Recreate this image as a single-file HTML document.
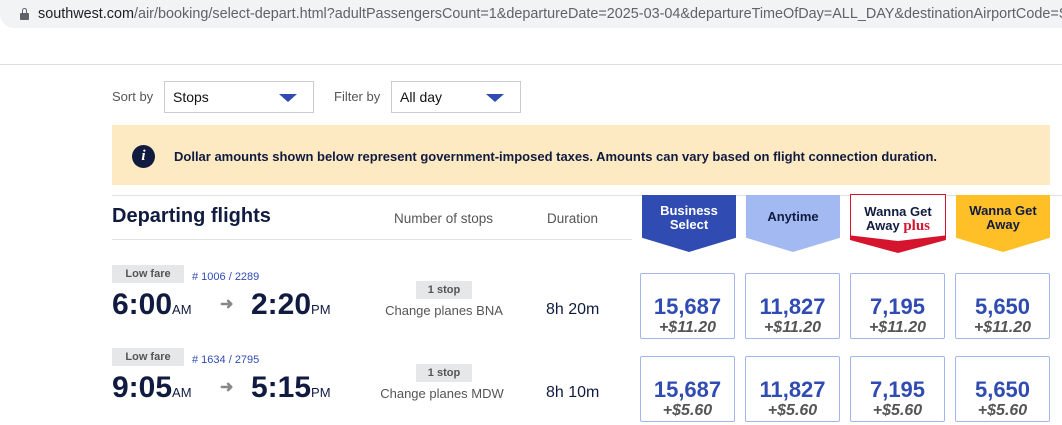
<!DOCTYPE html>
<html><head><style>
*{margin:0;padding:0;box-sizing:border-box}
body{width:1062px;height:425px;overflow:hidden;background:#fff;font-family:"Liberation Sans",Arial,sans-serif;position:relative;color:#111b40}
.a{position:absolute}
.url{left:0;top:0;width:1062px;height:28px;background:#f1f3f4;border-radius:0 0 0 14px;font-size:14.4px;color:#5f6368;line-height:28px;padding-left:38px;white-space:nowrap;overflow:hidden}
.url b{font-weight:normal;color:#202124}
.sel{height:32px;border:1px solid #ccc;font-size:14px;line-height:30px;padding-left:8px;color:#111}
.tri{position:absolute;right:16px;top:12px;width:0;height:0;border-left:9px solid transparent;border-right:9px solid transparent;border-top:8px solid #304cb2}
.lbl{font-size:13px;color:#555}
.hdr{width:94px;height:57px;font-weight:bold;font-size:13px;text-align:center;line-height:14px;clip-path:polygon(0 0,100% 0,100% 75%,50% 100%,0 75%)}
.box{width:95px;height:66px;border:1px solid #a3b7ee;border-radius:2px;text-align:center}
.box .p{margin-top:21px;font-size:22px;font-weight:bold;color:#304cb2;line-height:24px}
.box .t{font-size:16px;font-weight:bold;font-style:italic;color:#555;line-height:18px}
.lf{width:72px;height:18px;background:#e6e7e8;color:#555;font-weight:bold;font-size:11px;text-align:center;line-height:18px}
.fn{font-size:11px;color:#304cb2}
.tm{font-size:30px;font-weight:bold;color:#111b40}
.tm small{font-size:13px;font-weight:normal}
.stop{width:56px;height:18px;background:#e6e7e8;color:#555;font-weight:bold;font-size:11px;text-align:center;line-height:18px}
.cp{font-size:13px;color:#555;width:160px;text-align:center}
.du{font-size:16px;color:#111b40}
</style></head><body>
<div class="a url"><b>southwest.com</b>/air/booking/select-depart.html?adultPassengersCount=1&amp;departureDate=2025-03-04&amp;departureTimeOfDay=ALL_DAY&amp;destinationAirportCode=SAT</div>
<div class="a" style="left:20px;top:13px;width:9px;height:7px;background:#5f6368;border-radius:1px"></div>
<div class="a" style="left:22px;top:8px;width:5px;height:7px;border:1.5px solid #5f6368;border-bottom:none;border-radius:3px 3px 0 0"></div>
<div class="a" style="left:0;top:64px;width:1062px;height:1px;background:#ddd"></div>
<div class="a lbl" style="left:112px;top:89px">Sort by</div>
<div class="a sel" style="left:164px;top:81px;width:150px">Stops<div class="tri"></div></div>
<div class="a lbl" style="left:334px;top:89px">Filter by</div>
<div class="a sel" style="left:391px;top:81px;width:130px">All day<div class="tri"></div></div>
<div class="a" style="left:112px;top:125px;width:938px;height:60px;background:#fde9c2"></div>
<div class="a" style="left:132px;top:145px;width:23px;height:23px;border-radius:50%;background:#111b40;color:#fff;font:italic bold 15px 'Liberation Serif',serif;text-align:center;line-height:23px">i</div>
<div class="a" style="left:174px;top:149px;font-size:13px;font-weight:bold;color:#111b40;white-space:nowrap">Dollar amounts shown below represent government-imposed taxes. Amounts can vary based on flight connection duration.</div>
<div class="a" style="left:112px;top:195px;width:950px;height:1px;background:#e2e2e2"></div>
<div class="a" style="left:112px;top:239px;width:520px;height:1px;background:#e2e2e2"></div>
<div class="a" style="left:112px;top:205px;font-size:20px;font-weight:bold;color:#111b40">Departing flights</div>
<div class="a lbl" style="left:394px;top:211px;font-size:13.5px">Number of stops</div>
<div class="a lbl" style="left:547px;top:211px;font-size:13.5px">Duration</div>
<div class="a hdr" style="left:642px;top:195px;background:#304cb2;color:#fff;padding-top:9px">Business<br>Select</div>
<div class="a hdr" style="left:746px;top:195px;background:#a3b9f1;color:#111b40;padding-top:15px">Anytime</div>
<div class="a" style="left:850px;top:194px;width:96px;height:59px;background:#d5152e;clip-path:polygon(0 0,100% 0,100% 78%,50% 100%,0 78%)"></div>
<div class="a hdr" style="left:851px;top:195px;width:94px;height:46px;background:#fff;color:#111b40;padding-top:10px;clip-path:polygon(0 0,100% 0,100% 88%,50% 100%,0 88%)">Wanna Get<br>Away <span style="color:#d5152e;font-family:'Liberation Serif',serif;font-size:15px">plus</span></div>
<div class="a hdr" style="left:956px;top:195px;background:#ffbf27;color:#111b40;padding-top:9px">Wanna Get<br>Away</div>

<div class="a lf" style="left:112px;top:265px">Low fare</div>
<div class="a fn" style="left:192px;top:271px"># 1006 / 2289</div>
<div class="a tm" style="left:112px;top:288px">6:00<small>AM</small></div>
<div class="a" style="left:220px;top:294px;color:#888;font-size:16px;font-weight:bold">&#10140;</div>
<div class="a tm" style="left:251px;top:288px">2:20<small>PM</small></div>
<div class="a stop" style="left:416px;top:281px">1 stop</div>
<div class="a cp" style="left:364px;top:303px">Change planes BNA</div>
<div class="a du" style="left:546px;top:301px">8h 20m</div>

<div class="a lf" style="left:112px;top:348px">Low fare</div>
<div class="a fn" style="left:192px;top:354px"># 1634 / 2795</div>
<div class="a tm" style="left:112px;top:371px">9:05<small>AM</small></div>
<div class="a" style="left:220px;top:377px;color:#888;font-size:16px;font-weight:bold">&#10140;</div>
<div class="a tm" style="left:251px;top:371px">5:15<small>PM</small></div>
<div class="a stop" style="left:416px;top:364px">1 stop</div>
<div class="a cp" style="left:362px;top:386px">Change planes MDW</div>
<div class="a du" style="left:546px;top:384px">8h 10m</div>

<div class="a box" style="left:640px;top:273px"><div class="p">15,687</div><div class="t">+$11.20</div></div>
<div class="a box" style="left:745px;top:273px"><div class="p">11,827</div><div class="t">+$11.20</div></div>
<div class="a box" style="left:850px;top:273px"><div class="p">7,195</div><div class="t">+$11.20</div></div>
<div class="a box" style="left:955px;top:273px"><div class="p">5,650</div><div class="t">+$11.20</div></div>
<div class="a box" style="left:640px;top:356px"><div class="p">15,687</div><div class="t">+$5.60</div></div>
<div class="a box" style="left:745px;top:356px"><div class="p">11,827</div><div class="t">+$5.60</div></div>
<div class="a box" style="left:850px;top:356px"><div class="p">7,195</div><div class="t">+$5.60</div></div>
<div class="a box" style="left:955px;top:356px"><div class="p">5,650</div><div class="t">+$5.60</div></div>
</body></html>
